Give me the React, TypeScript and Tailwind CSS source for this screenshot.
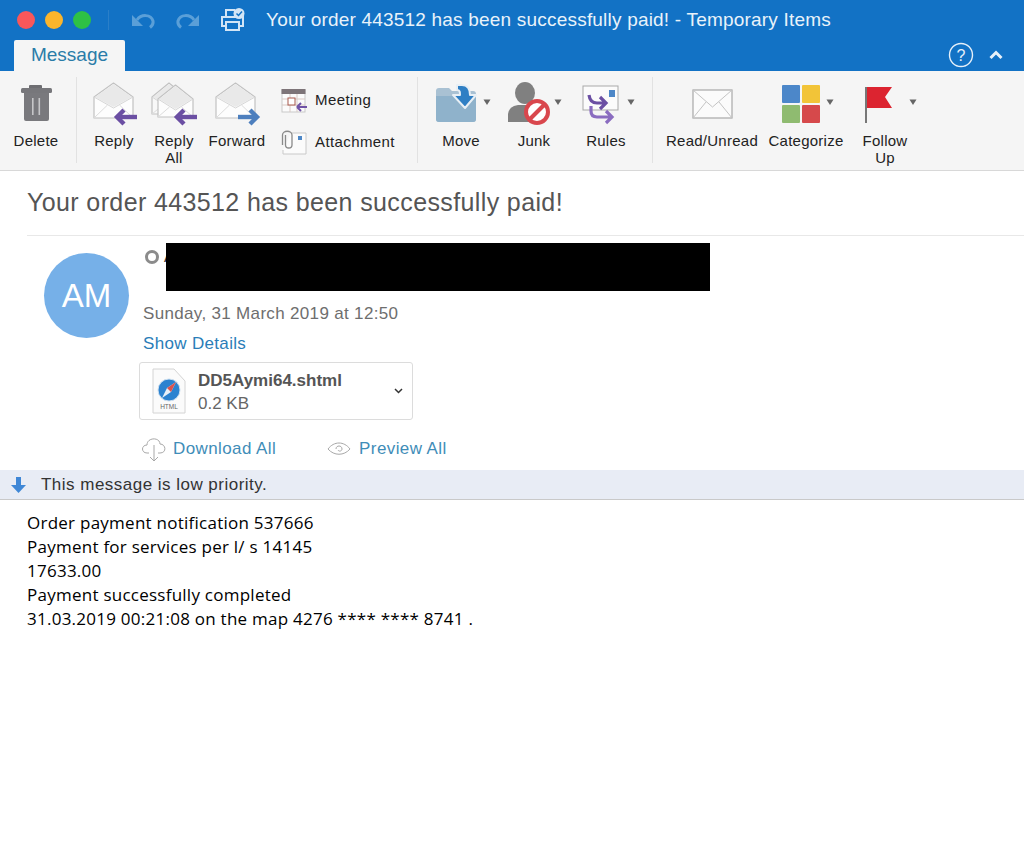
import React from "react";

const font = { fontFamily: '"Liberation Sans", Arial, sans-serif' };

function Env({ x, y = 3, w = 39, h = 35, bg = "#fdfdfd" }: { x: number; y?: number; w?: number; h?: number; bg?: string }) {
  const r = x + w, m = x + w / 2, b = y + h, s = y + 14;
  return (
    <g strokeLinejoin="round">
      <path d={`M${x} ${s} L${m} ${y} L${r} ${s} L${r} ${b} L${x} ${b} Z`} fill={bg} stroke="#c2c2c2" strokeWidth="1.2" />
      <path d={`M${x + 1} ${s} L${m} ${y + 1} L${r - 1} ${s} L${m} ${s + 10} Z`} fill="#e9e9e9" />
      <path d={`M${x} ${s} L${m} ${s + 11} L${r} ${s}`} fill="none" stroke="#d6d6d6" strokeWidth="1" />
      <path d={`M${x} ${b} L${m - 6} ${s + 8} M${r} ${b} L${m + 6} ${s + 8}`} stroke="#dcdcdc" strokeWidth="1" />
    </g>
  );
}

function ArrowL({ x, y, color = "#6b4fa3" }: { x: number; y: number; color?: string }) {
  return (
    <g fill="none" stroke={color} strokeWidth="4.4">
      <path d={`M${x + 1} ${y} H${x + 21}`} />
      <path d={`M${x + 8} ${y - 7} L${x + 1} ${y} L${x + 8} ${y + 7}`} />
    </g>
  );
}
function ArrowR({ x, y, color = "#4d7fbe" }: { x: number; y: number; color?: string }) {
  return (
    <g fill="none" stroke={color} strokeWidth="4.4">
      <path d={`M${x} ${y} H${x + 19}`} />
      <path d={`M${x + 12} ${y - 7} L${x + 19} ${y} L${x + 12} ${y + 7}`} />
    </g>
  );
}
function Caret({ x, y }: { x: number; y: number }) {
  return <path d={`M${x - 3.5} ${y - 2.5} H${x + 3.5} L${x} ${y + 3} Z`} fill="#666" />;
}

const TrashIcon = (
  <svg width="72" height="46" viewBox="0 0 72 46">
    <rect x="29" y="5" width="13" height="4" rx="1" fill="#6e6e72" />
    <rect x="21" y="8" width="31" height="5" rx="1.5" fill="#77777b" />
    <path d="M24 13 H49 V39 Q49 41 47 41 H26 Q24 41 24 39 Z" fill="#79797d" />
    <rect x="32" y="18" width="1.6" height="17" fill="#c6c6c8" />
    <rect x="38.5" y="18" width="1.6" height="17" fill="#c6c6c8" />
  </svg>
);
const ReplyIcon = (
  <svg width="74" height="48" viewBox="0 0 74 48">
    <Env x={17} />
    <ArrowL x={39} y={37} />
  </svg>
);
const ReplyAllIcon = (
  <svg width="46" height="48" viewBox="0 0 46 48">
    <Env x={1} y={3} w={34} h={31} bg="#f8f8f8" />
    <Env x={7} y={5} w={35} h={32} />
    <ArrowL x={25} y={37} />
  </svg>
);
const ForwardIcon = (
  <svg width="80" height="48" viewBox="0 0 80 48">
    <Env x={19} />
    <ArrowR x={41} y={37} />
  </svg>
);
const MoveIcon = (
  <svg width="86" height="46" viewBox="0 0 86 46">
    <path d="M18 11 Q18 8 21 8 H31 L34 11 H55 Q58 11 58 14 V39 Q58 42 55 42 H21 Q18 42 18 39 Z" fill="#a9c1d3" />
    <path d="M18 16 H58 V39 Q58 42 55 42 H21 Q18 42 18 39 Z" fill="#8fb2cb" />
    <path d="M39 5 H44 C50 5 52 9 52 15 L58 15 L47 28 L35 15 L42 15 C42 12 42 10 39 10 Z" fill="#2f7fc4" stroke="#e8eff5" strokeWidth="2" strokeLinejoin="round" />
    <Caret x={69} y={22} />
  </svg>
);
const JunkIcon = (
  <svg width="60" height="46" viewBox="0 0 60 46">
    <ellipse cx="21" cy="13" rx="10" ry="11" fill="#808080" />
    <path d="M4 42 V34 Q5 26 14 25 H28 Q32 26 34 30 L30 42 Z" fill="#808080" />
    <circle cx="33" cy="32" r="11" fill="#fff" stroke="#d9474d" strokeWidth="4" />
    <path d="M25 40 L41 24" stroke="#d9474d" strokeWidth="4" />
    <Caret x={54} y={22} />
  </svg>
);
const RulesIcon = (
  <svg width="84" height="46" viewBox="0 0 84 46">
    <rect x="19" y="6" width="35" height="24" fill="#fbfbfb" stroke="#a9a9a9" />
    <rect x="45" y="10" width="6" height="7" fill="#4d87c7" />
    <path d="M25 15 Q26 23 33 23 H41 M36 17 L42 23 L36 29" fill="none" stroke="#6b4fa3" strokeWidth="3.2" />
    <path d="M27 26 V31 Q27 37 33 37 H47 M42 31 L48 37 L42 43" fill="none" stroke="#8a6cc0" strokeWidth="3.2" />
    <Caret x={67} y={22} />
  </svg>
);
const MailIcon = (
  <svg width="118" height="46" viewBox="0 0 118 46">
    <rect x="40" y="10" width="39" height="28" fill="#fbfbfb" stroke="#a8a8a8" strokeWidth="1.2" />
    <path d="M40 10 L59.5 27 L79 10 M40 38 L53 22 M79 38 L66 22" fill="none" stroke="#c4c4c4" />
  </svg>
);
const CategorizeIcon = (
  <svg width="70" height="46" viewBox="0 0 70 46">
    <rect x="11" y="5" width="18" height="18" rx="1" fill="#4c87c9" />
    <rect x="31" y="5" width="18" height="18" rx="1" fill="#f2c438" />
    <rect x="11" y="25" width="18" height="18" rx="1" fill="#8fbb70" />
    <rect x="31" y="25" width="18" height="18" rx="1" fill="#d6494b" />
    <Caret x={59} y={22} />
  </svg>
);
const FlagIcon = (
  <svg width="88" height="46" viewBox="0 0 88 46">
    <rect x="24" y="7" width="2" height="36" fill="#777" />
    <path d="M26 7 H51 L44 17 L51 28 H26 Z" fill="#dc2430" />
    <Caret x={72} y={22} />
  </svg>
);

function Item({ w, icon, label }: { w: string; icon: React.ReactNode; label: React.ReactNode }) {
  return (
    <div className={`flex flex-col items-center ${w}`}>
      <div className="h-[52px] flex items-start">{icon}</div>
      <div className="text-[15px] tracking-[0.25px] leading-[17px] text-[#222] text-center whitespace-nowrap">{label}</div>
    </div>
  );
}
const Divider = () => <div className="w-px h-[86px] -mt-[3px] bg-[#e2e2e2]" />;

export default function App() {
  return (
    <div className="w-[1024px] h-[846px] bg-white overflow-hidden" style={font}>
      {/* title */}
      <div className="bg-[#1272c5] h-[71px] flex flex-col">
        <div className="h-[40px] flex items-center">
          <div className="flex items-center gap-[10px] ml-[17px]">
            <span className="w-[18px] h-[18px] rounded-full bg-[#f9575a]" />
            <span className="w-[18px] h-[18px] rounded-full bg-[#fbb52c]" />
            <span className="w-[18px] h-[18px] rounded-full bg-[#2ec145]" />
          </div>
          <span className="w-px h-[20px] bg-[#2a7fc8] ml-[17px]" />
          <svg className="ml-[22px]" width="24" height="18" viewBox="0 0 24 18">
            <path d="M1 15 V4 L12 15 Z" fill="#5a9fd8" />
            <path d="M6 9 C10 3 20 3 22 10 C22.5 13 21 15 19 16.5" fill="none" stroke="#5a9fd8" strokeWidth="3" />
          </svg>
          <svg className="ml-[21px]" width="24" height="18" viewBox="0 0 24 18">
            <path d="M23 15 V4 L12 15 Z" fill="#5a9fd8" />
            <path d="M18 9 C14 3 4 3 2 10 C1.5 13 3 15 5 16.5" fill="none" stroke="#5a9fd8" strokeWidth="3" />
          </svg>
          <svg className="ml-[20px]" width="26" height="24" viewBox="0 0 26 24" fill="none" stroke="#d2e5f6" strokeWidth="2">
            <path d="M6 8 V2 H15 M5 18 H2 V9 H23 V18 H20" />
            <rect x="6" y="14" width="13" height="8" />
            <circle cx="19" cy="5.5" r="5.5" fill="#d2e5f6" stroke="none" />
            <path d="M16.5 5.5 L18.5 7.5 L22 3.5" stroke="#1272c5" strokeWidth="1.5" />
          </svg>
          <span className="ml-[20px] text-[19px] tracking-[0.2px] text-[#e9f2fa] whitespace-nowrap">Your order 443512 has been successfully paid! - Temporary Items</span>
        </div>
        <div className="h-[31px] flex">
          <div className="ml-[14px] w-[111px] h-[31px] bg-[#f5f5f5] rounded-t-[2px] text-center text-[19px] leading-[30px] text-[#2a7ca8]">Message</div>
          <div className="ml-auto flex items-center gap-[15px] mr-[21px] pb-[2px]">
            <svg width="26" height="26" viewBox="0 0 26 26" fill="none" stroke="#e6f0f9" strokeWidth="1.4">
              <circle cx="13" cy="13" r="11.5" />
              <text x="13" y="18.5" textAnchor="middle" fontSize="16" fill="#e6f0f9" stroke="none" fontFamily="Liberation Sans">?</text>
            </svg>
            <svg width="14" height="10" viewBox="0 0 14 10" fill="none" stroke="#e6f0f9" strokeWidth="3">
              <path d="M1.5 8 L7 2.5 L12.5 8" />
            </svg>
          </div>
        </div>
      </div>

      {/* ribbon */}
      <div className="h-[100px] bg-[#f5f5f5] border-b border-[#d8d8d8] flex pt-[9px] items-start">
        <Item w="w-[72px]" icon={TrashIcon} label="Delete" />
        <div className="w-1" />
        <Divider />
        <Item w="w-[74px]" icon={ReplyIcon} label="Reply" />
        <Item w="w-[46px]" icon={ReplyAllIcon} label={<>Reply<br />All</>} />
        <Item w="w-[80px]" icon={ForwardIcon} label="Forward" />
        <div className="w-[136px] ml-[4px] flex flex-col gap-[15px] pt-[7px]">
          <div className="flex items-center gap-[8px] h-[27px]">
            <svg width="26" height="26" viewBox="0 0 26 26">
              <rect x="1" y="2" width="23" height="22" fill="#fbfbfb" stroke="#c9c9c9" />
              <rect x="0.5" y="1" width="24" height="5" fill="#7d7478" />
              <path d="M1 11 H24 M1 17 H24 M9 6 V24 M16 6 V24" stroke="#d9c9c4" />
              <rect x="7" y="10" width="7" height="7" fill="#fff" stroke="#a85a4e" />
              <path d="M16 19 H26 M16 19 L20 15 M16 19 L20 23" stroke="#6f53a6" strokeWidth="2" fill="none" />
            </svg>
            <span className="text-[15px] tracking-[0.4px] text-[#222]">Meeting</span>
          </div>
          <div className="flex items-center gap-[8px] h-[27px]">
            <svg width="26" height="26" viewBox="0 0 26 26" fill="none">
              <path d="M10 3 H25 V24 H2 V20" fill="#fbfbfb" stroke="#c9c9c9" />
              <rect x="17" y="6" width="4" height="4" fill="#4d87c7" />
              <path d="M4.5 5 V15 C4.5 19 11 19 11 15 V5 C11 0 1.5 0 1.5 5 V15" stroke="#8a8a8a" strokeWidth="1.3" fill="none" />
            </svg>
            <span className="text-[15px] tracking-[0.4px] text-[#222]">Attachment</span>
          </div>
        </div>
        <Divider />
        <Item w="w-[86px]" icon={MoveIcon} label="Move" />
        <Item w="w-[60px]" icon={JunkIcon} label="Junk" />
        <Item w="w-[84px]" icon={RulesIcon} label="Rules" />
        <div className="w-1" />
        <Divider />
        <Item w="w-[118px]" icon={MailIcon} label="Read/Unread" />
        <Item w="w-[70px]" icon={CategorizeIcon} label="Categorize" />
        <Item w="w-[88px]" icon={FlagIcon} label={<>Follow<br />Up</>} />
      </div>

      {/* subject */}
      <div className="ml-[27px] h-[65px] border-b border-[#e8e8e8] flex items-center text-[25px] tracking-[0.38px] text-[#555] whitespace-nowrap">
        Your order 443512 has been successfully paid!
      </div>

      {/* sender */}
      <div className="flex h-[234px]">
        <div className="ml-[44px] mt-[17px] w-[85px] h-[85px] rounded-full bg-[#76b0e8] flex items-center justify-center text-white text-[33px] shrink-0">AM</div>
        <div className="ml-[10px] flex flex-col">
          <div className="flex items-start mt-[7px] h-[48px] ml-[6px]">
            <span className="mt-[7px] w-[14px] h-[14px] rounded-full border-[3px] border-[#8b8b8b] shrink-0" />
            <span className="ml-[5px] mt-[5px] w-[11px] text-[16px] leading-[18px] text-[#333]">A</span>
            <div className="relative -ml-[9px] w-[544px] h-[48px] bg-black" />
          </div>
          <div className="ml-[4px] mt-[10px] text-[17px] tracking-[0.33px] leading-[26px] text-[#6e6e6e] whitespace-nowrap">Sunday, 31 March 2019 at 12:50</div>
          <div className="ml-[4px] mt-[4px] text-[17px] tracking-[0.33px] leading-[26px] text-[#2a7db8]">Show Details</div>
          <div className="mt-[5px] w-[274px] h-[58px] rounded-[3px] border border-[#dcdcdc] flex items-center">
            <svg className="ml-[12px]" width="34" height="46" viewBox="0 0 34 46">
              <path d="M1 1 H22 L33 13 V45 H1 Z" fill="#fbfbfb" stroke="#d4d4d4" />
              <circle cx="17" cy="22" r="11" fill="#2b82d0" />
              <circle cx="17" cy="22" r="11" fill="none" stroke="#cfe0f0" strokeWidth="1" />
              <path d="M24 14 L19 24 L10 30 L15 20 Z" fill="#e8f0f8" />
              <path d="M24 14 L19 24 L15 20 Z" fill="#d9534f" />
              <text x="17" y="41" textAnchor="middle" fontSize="6.5" fill="#666" fontFamily="Liberation Sans">HTML</text>
            </svg>
            <div className="ml-[12px] flex flex-col pt-[2px]">
              <span className="text-[17px] leading-[23px] font-bold text-[#555] whitespace-nowrap">DD5Aymi64.shtml</span>
              <span className="text-[17px] leading-[23px] text-[#666]">0.2 KB</span>
            </div>
            <svg className="ml-auto mr-[9px]" width="9" height="6" viewBox="0 0 9 6" fill="none" stroke="#333" strokeWidth="1.5">
              <path d="M1 1 L4.5 4.5 L8 1" />
            </svg>
          </div>
          <div className="flex items-center mt-[16px] h-[26px] ml-[3px]">
            <svg width="24" height="26" viewBox="0 0 24 26" fill="none" stroke="#a8a8a8" strokeWidth="1">
              <path d="M7 17 H5 C-1 17 -1 9 5 9 C5 1 18 1 18 8 C24 8 25 17 18 17 H16" />
              <path d="M12 9 V25 M8 21 L12 25 L16 21" />
            </svg>
            <span className="ml-[7px] text-[17px] tracking-[0.4px] text-[#3f8db8] whitespace-nowrap">Download All</span>
            <svg className="ml-[51px]" width="24" height="16" viewBox="0 0 24 16" fill="none" stroke="#a8a8a8" strokeWidth="1">
              <path d="M1 8 C7 0 17 0 23 8 C17 15 7 15 1 8 Z" />
              <path d="M9 8 C9 4 15 4 15 8 C15 10 12 11 11 9" />
            </svg>
            <span className="ml-[8px] text-[17px] tracking-[0.4px] text-[#3f8db8] whitespace-nowrap">Preview All</span>
          </div>
        </div>
      </div>

      {/* low priority */}
      <div className="h-[30px] bg-[#e8ecf5] border-b border-[#c9c9c9] flex items-center">
        <svg className="ml-[11px]" width="15" height="18" viewBox="0 0 15 18">
          <path d="M5 1 H10 V9 H15 L7.5 17 L0 9 H5 Z" fill="#3f87d6" />
        </svg>
        <span className="ml-[15px] text-[17px] tracking-[0.48px] text-[#333]">This message is low priority.</span>
      </div>

      {/* body */}
      <div className="ml-[27px] mt-[11px] text-[17px] tracking-[0.25px] leading-[24px] text-black whitespace-nowrap" style={{ fontFamily: '"Open Sans", sans-serif' }}>
        <div>Order payment notification 537666</div>
        <div>Payment for services per l/ s 14145</div>
        <div>17633.00</div>
        <div>Payment successfully completed</div>
        <div>31.03.2019 00:21:08 on the map 4276 **** **** 8741 .</div>
      </div>
    </div>
  );
}
